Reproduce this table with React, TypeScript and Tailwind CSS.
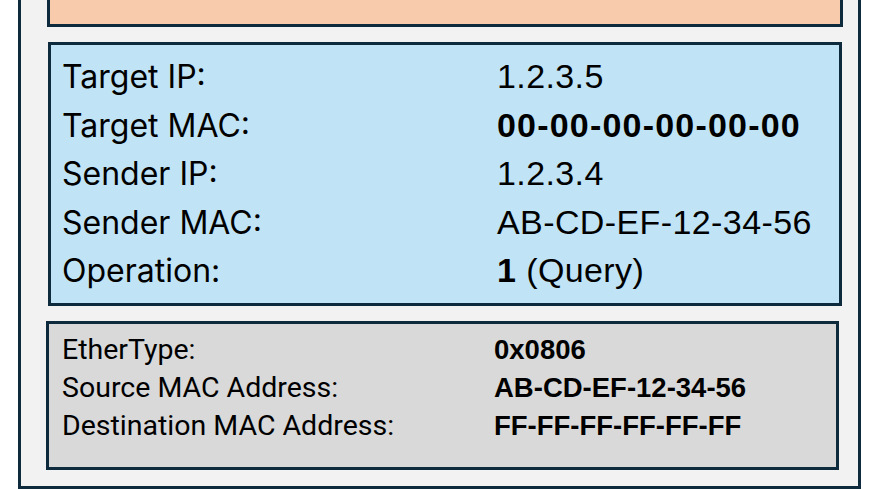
// ARP packet diagram: header stack inside a framed panel
const labelFont = { fontFamily: "Inter, 'Noto Sans', sans-serif" };

type Row = { label: string; value: React.ReactNode };

const arpRows: Row[] = [
  { label: "Target IP:", value: "1.2.3.5" },
  { label: "Target MAC:", value: <b className="tracking-[1.2px]">00-00-00-00-00-00</b> },
  { label: "Sender IP:", value: "1.2.3.4" },
  { label: "Sender MAC:", value: "AB-CD-EF-12-34-56" },
  {
    label: "Operation:",
    value: (
      <>
        <b>1</b> (Query)
      </>
    ),
  },
];

const ethRows: Row[] = [
  { label: "EtherType:", value: "0x0806" },
  { label: "Source MAC Address:", value: "AB-CD-EF-12-34-56" },
  { label: "Destination MAC Address:", value: "FF-FF-FF-FF-FF-FF" },
];

export default function App() {
  return (
    <div className="w-[879px] h-[489px] bg-white overflow-hidden">
      <div className="ml-[18px] w-[843px] h-[489px] bg-[#f2f2f2] border-x-[3px] border-b-[3px] border-[#0e2a3d] flex flex-col items-start">
        {/* payload (cut off at top) */}
        <div className="ml-[26px] w-[796px] h-[27px] bg-[#f8cbad] border-x-[3px] border-b-[3px] border-[#0e2a3d]" />

        {/* ARP header */}
        <div className="ml-[27px] mt-[15px] w-[794px] h-[264px] bg-[#c0e4f5] border-[3px] border-[#0e2a3d] pl-[11px] pt-[7px] text-black">
          {arpRows.map((r) => (
            <div key={r.label} className="h-[48.5px] grid grid-cols-[435px_1fr] items-baseline leading-[48.5px]">
              <span className="text-[32px]" style={labelFont}>
                {r.label}
              </span>
              <span className="text-[34px] tracking-[0.4px] font-['Liberation_Sans',Arial,sans-serif]">{r.value}</span>
            </div>
          ))}
        </div>

        {/* Ethernet header */}
        <div className="ml-[25px] mt-[15px] w-[793px] h-[149px] bg-[#d9d9d9] border-[3px] border-[#0e2a3d] pl-[13px] pt-[7px] text-black">
          {ethRows.map((r) => (
            <div key={r.label} className="h-[38px] grid grid-cols-[432px_1fr] items-baseline leading-[38px]">
              <span className="text-[28.5px] font-['Roboto',sans-serif]">{r.label}</span>
              <span className="text-[27.5px] font-bold font-['Liberation_Sans',Arial,sans-serif]">{r.value}</span>
            </div>
          ))}
        </div>
      </div>
    </div>
  );
}
